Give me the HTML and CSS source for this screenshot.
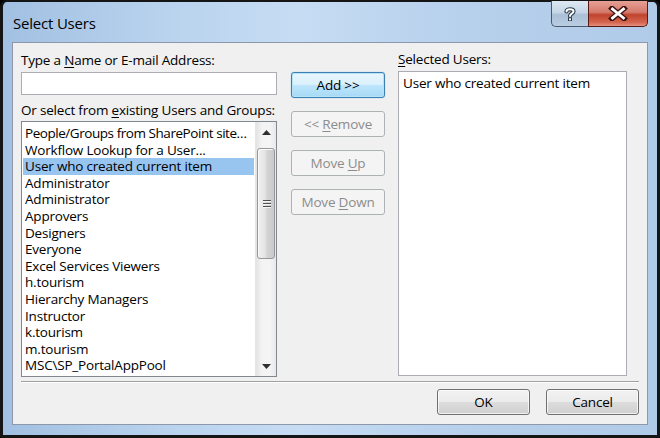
FILE: index.html
```html
<!DOCTYPE html>
<html>
<head>
<meta charset="utf-8">
<title>Select Users</title>
<link rel="stylesheet" href="styles.css">
</head>
<body>
<div class="window">
  <div class="titlebar">
    <span class="title">Select Users</span>
    <div class="caption-buttons">
      <div class="cap help">
        <svg width="14" height="16" viewBox="0 0 14 16"><path d="M3.5 5.5 C3.5 2.5 10.5 2.5 10.5 5.5 C10.5 7.5 7 7.5 7 10" fill="none" stroke="#2b3a4a" stroke-width="4.2" stroke-linecap="round"/><path d="M3.5 5.5 C3.5 2.5 10.5 2.5 10.5 5.5 C10.5 7.5 7 7.5 7 10" fill="none" stroke="#fff" stroke-width="2" stroke-linecap="round"/><rect x="5" y="11.5" width="4" height="3.5" fill="#2b3a4a"/><rect x="6" y="12.3" width="2" height="2" fill="#fff"/></svg>
      </div>
      <div class="cap close">
        <svg width="20" height="15" viewBox="0 0 20 15"><path d="M4 2.5 L16 12.5 M16 2.5 L4 12.5" stroke="#3a1010" stroke-width="5.5" stroke-linecap="square"/><path d="M4.5 3 L15.5 12 M15.5 3 L4.5 12" stroke="#fff" stroke-width="2.8" stroke-linecap="square"/></svg>
      </div>
    </div>
  </div>
  <div class="client">
    <div class="main">
      <div class="col-left">
        <div class="label first">Type a <u>N</u>ame or E-mail Address:</div>
        <div class="textbox"></div>
        <div class="label second">Or select from <u>e</u>xisting Users and Groups:</div>
        <div class="listbox">
          <div class="items">
            <div class="item tight">People/Groups from SharePoint site…</div>
            <div class="item">Workflow Lookup for a User...</div>
            <div class="item selected">User who created current item</div>
            <div class="item">Administrator</div>
            <div class="item">Administrator</div>
            <div class="item">Approvers</div>
            <div class="item">Designers</div>
            <div class="item">Everyone</div>
            <div class="item">Excel Services Viewers</div>
            <div class="item">h.tourism</div>
            <div class="item">Hierarchy Managers</div>
            <div class="item">Instructor</div>
            <div class="item">k.tourism</div>
            <div class="item">m.tourism</div>
            <div class="item">MSC\SP_PortalAppPool</div>
          </div>
          <div class="scrollbar">
            <div class="arrow">
              <svg width="9" height="5" viewBox="0 0 9 5"><path d="M0 5 L4.5 0 L9 5 Z" fill="#303030"/></svg>
            </div>
            <div class="track">
              <div class="thumb">
                <div class="grip"><i></i><i></i><i></i></div>
              </div>
            </div>
            <div class="arrow">
              <svg width="9" height="5" viewBox="0 0 9 5"><path d="M0 0 L9 0 L4.5 5 Z" fill="#303030"/></svg>
            </div>
          </div>
        </div>
      </div>
      <div class="col-mid">
        <button class="btn default">Add &gt;&gt;</button>
        <button class="btn disabled">&lt;&lt; <u>R</u>emove</button>
        <button class="btn disabled">Move <u>U</u>p</button>
        <button class="btn disabled">Move <u>D</u>own</button>
      </div>
      <div class="col-right">
        <div class="label first"><u>S</u>elected Users:</div>
        <div class="selbox">
          <div class="selitem">User who created current item</div>
        </div>
      </div>
    </div>
    <div class="separator"></div>
    <div class="footer">
      <button class="btn">OK</button>
      <button class="btn">Cancel</button>
    </div>
  </div>
</div>
</body>
</html>
```
FILE: styles.css
```css
* { box-sizing: border-box; }
html, body {
  margin: 0;
  padding: 0;
  width: 660px;
  height: 438px;
  overflow: hidden;
  background: #000;
}
body {
  font-family: "Segoe UI", "Open Sans", sans-serif;
  font-size: 13.5px;
  letter-spacing: -0.2px;
  color: #000;
}
u { text-decoration: underline; text-underline-offset: 2px; }

.window {
  width: 660px;
  height: 438px;
  border: 3px solid #151515;
  border-top-width: 2px;
  border-radius: 7px 7px 2px 2px;
  background: linear-gradient(90deg, #a2c0e2 0%, #b9d3ee 25%, #c6dcf3 45%, #b7d0ec 70%, #b0cbe8 100%);
  padding: 0 9px 10px 9px;
  display: flex;
  flex-direction: column;
}

.titlebar {
  height: 40px;
  display: flex;
  justify-content: space-between;
  align-items: flex-start;
  flex: none;
}
.title {
  margin-top: 11px;
  margin-left: 1px;
  font-size: 15px;
  letter-spacing: -0.2px;
  line-height: 20px;
  color: #000;
}
.caption-buttons {
  display: flex;
  margin-top: -1px;
}
.cap {
  height: 26px;
  display: flex;
  align-items: center;
  justify-content: center;
  border: 1px solid #4a5a6e;
  border-top: none;
}
.help {
  width: 37px;
  border-radius: 0 0 0 5px;
  border-right: none;
  background: linear-gradient(180deg, #dde8f3 0%, #c6d6e7 45%, #aac0d7 55%, #b9cde2 100%);
}
.close {
  width: 60px;
  border-radius: 0 0 5px 0;
  border-color: #5a1a14;
  background: linear-gradient(180deg, #e5a094 0%, #d47a6c 45%, #c0432e 55%, #d4654f 85%, #e39080 100%);
}

.client {
  flex: 1;
  background: #f0f0f0;
  border: 1px solid #8d99ab;
  display: flex;
  flex-direction: column;
}

.main {
  display: flex;
  padding: 6px 8px 0 8px;
  height: 334px;
}
.col-left {
  width: 256px;
  display: flex;
  flex-direction: column;
}
.label {
  line-height: 20px;
  height: 20px;
  white-space: nowrap;
}
.col-left .label.first { margin-top: 1px; }
.label.second { margin-top: 5px; }

.textbox {
  height: 23px;
  margin-top: 2px;
  background: #fff;
  border: 1px solid #abadb3;
}

.listbox {
  margin-top: 1px;
  height: 256px;
  background: #fff;
  border: 1px solid #828790;
  display: flex;
  padding: 1px;
}
.items {
  flex: 1;
  min-width: 0;
  padding-top: 2px;
  overflow: hidden;
}
.item {
  height: 16.6px;
  line-height: 16.6px;
  padding-left: 2px;
  white-space: nowrap;
  overflow: hidden;
  text-overflow: ellipsis;
}
.item.tight { letter-spacing: -0.45px; }
.item.selected { background: #98c4f0; }

.scrollbar {
  width: 21px;
  flex: none;
  margin: -1px -1px -1px 1px;
  background: linear-gradient(90deg, #e3e3e3, #f4f4f4 30%, #f4f4f4 70%, #e8e8e8);
  border-left: 1px solid #e6e6e6;
  display: flex;
  flex-direction: column;
}
.arrow {
  height: 20px;
  display: flex;
  align-items: center;
  justify-content: center;
  flex: none;
}
.track {
  flex: 1;
  padding: 6px 1px 0 1px;
}
.thumb {
  height: 111px;
  border: 1px solid #979797;
  border-radius: 3px;
  background: linear-gradient(90deg, #f0f0f0 0%, #e4e4e4 45%, #d4d4d4 55%, #c9c9c9 100%);
  box-shadow: inset 1px 1px 0 #fafafa;
  display: flex;
  align-items: center;
  justify-content: center;
}
.grip {
  display: flex;
  flex-direction: column;
  gap: 2px;
  margin-left: 2px;
}
.grip i {
  display: block;
  width: 8px;
  height: 1px;
  background: #505050;
  box-shadow: 0 1px 0 #f5f5f5;
}

.col-mid {
  width: 94px;
  margin-left: 14px;
  padding-top: 23px;
  display: flex;
  flex-direction: column;
  gap: 13px;
}

.btn {
  font-family: inherit;
  font-size: 13.5px;
  letter-spacing: -0.2px;
  color: #000;
  height: 26px;
  padding: 0;
  border: 1px solid #707070;
  border-radius: 3px;
  background: linear-gradient(180deg, #f2f2f2 0%, #ebebeb 49%, #dddddd 50%, #cfcfcf 100%);
  box-shadow: inset 0 0 0 1px rgba(255,255,255,0.7);
  line-height: 22px;
}
.btn.default {
  border-color: #3c7fb1;
  background: linear-gradient(180deg, #eaf6fd 0%, #d9f0fc 49%, #bee6fd 50%, #a7d9f5 100%);
  box-shadow: inset 0 0 0 1px #b7e3f9, 0 0 1px #48a8e0;
}
.btn.disabled {
  color: #8c8c8c;
  border-color: #adb2b5;
  background: #f4f4f4;
  box-shadow: none;
}

.col-right {
  width: 229px;
  margin-left: 13px;
  display: flex;
  flex-direction: column;
}
.selbox {
  margin-top: 2px;
  height: 305px;
  background: #fff;
  border: 1px solid #abadb3;
  padding: 2px 4px;
}
.selitem { line-height: 18px; }

.separator {
  margin: 4px 8px 0 8px;
  height: 2px;
  border-top: 1px solid #a0a0a0;
  border-bottom: 1px solid #ffffff;
}

.footer {
  display: flex;
  justify-content: flex-end;
  gap: 16px;
  padding: 6px 8px 0 0;
}
.footer .btn { width: 93px; }
```
